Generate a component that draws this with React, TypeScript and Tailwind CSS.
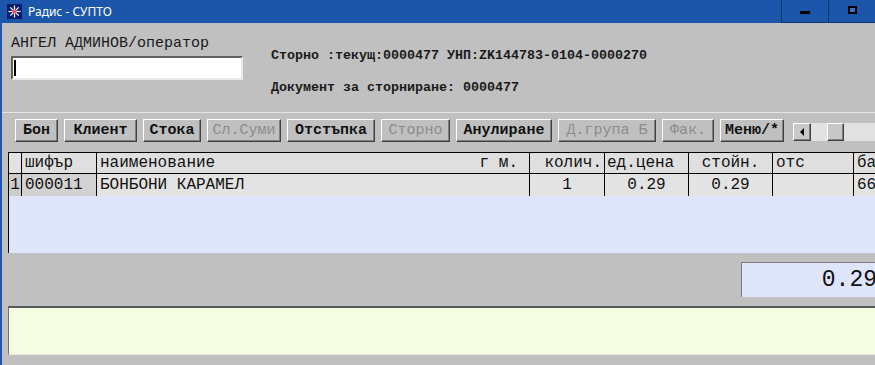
import React from 'react';

const mono = { fontFamily: '"Liberation Mono", "Courier New", monospace' };

interface Btn {
  label: string;
  w: string;
  disabled?: boolean;
}

const buttons: Btn[] = [
  { label: 'Бон', w: 'w-[43px]' },
  { label: 'Клиент', w: 'w-[73px]' },
  { label: 'Стока', w: 'w-[58px]' },
  { label: 'Сл.Суми', w: 'w-[74px]', disabled: true },
  { label: 'Отстъпка', w: 'w-[88px]' },
  { label: 'Сторно', w: 'w-[69px]', disabled: true },
  { label: 'Анулиране', w: 'w-[96px]' },
  { label: 'Д.група Б', w: 'w-[98px]', disabled: true },
  { label: 'Фак.', w: 'w-[52px]', disabled: true },
  { label: 'Меню/*', w: 'w-[64px]' },
];

const AppIcon = () => (
  <svg width="15" height="15" viewBox="0 0 15 15">
    <rect width="15" height="15" fill="#0b1c6e" />
    <g stroke="#ffffff" strokeWidth="1.2">
      <line x1="7.5" y1="1.5" x2="7.5" y2="13.5" />
      <line x1="1.5" y1="7.5" x2="13.5" y2="7.5" />
      <line x1="3.3" y1="3.3" x2="11.7" y2="11.7" />
      <line x1="11.7" y1="3.3" x2="3.3" y2="11.7" />
    </g>
    <circle cx="7.5" cy="7.5" r="2" fill="#ff4d6d" />
  </svg>
);

// raised win32-style button edge
const raised =
  'border border-t-white border-l-white border-r-[#404040] border-b-[#404040] shadow-[inset_-1px_-1px_0_#808080]';

const cell = 'shrink-0 border-r border-black';

export default function App() {
  return (
    <div className="w-[875px] h-[365px] overflow-hidden bg-[#c0c0c0] flex flex-col" style={mono}>
      {/* title bar */}
      <div className="h-[23px] shrink-0 bg-[#1c56aa] flex items-center">
        <div className="ml-[7px]">
          <AppIcon />
        </div>
        <span
          className="ml-[6px] text-white text-[12px] leading-none"
          style={{ fontFamily: '"Noto Sans", "Open Sans", sans-serif' }}
        >
          Радис - СУПТО
        </span>
        <div className="ml-auto flex h-full self-stretch">
          <div className="w-[47px] h-full border-l border-b border-[#0f3672] flex items-center justify-center">
            <div className="w-[10px] h-[3px] bg-black mt-[2px]" />
          </div>
          <div className="w-[47px] h-full border-l border-b border-[#0f3672] flex items-start pl-[19px] pt-[6px]">
            <div className="w-[9px] h-[8px] border-2 border-black bg-[#3c74c4]" />
          </div>
        </div>
      </div>

      <div className="flex flex-1 min-h-0">
        <div className="w-[2px] bg-[#1c56aa] shrink-0" />
        <div className="flex-1 flex flex-col min-w-0">
          {/* header info */}
          <div className="h-[89px] shrink-0 flex">
            <div className="w-[269px] pl-[9px] pt-[12px] shrink-0">
              <div className="text-[15px] leading-[18px] text-[#1a1a1a]">АНГЕЛ АДМИНОВ/оператор</div>
              <div className="mt-[3px] w-[232px] h-[24px] bg-white border-2 border-t-[#606060] border-l-[#606060] border-r-[#e8e8e8] border-b-[#e8e8e8] flex items-center pl-[1px]">
                <div className="w-[2px] h-[16px] bg-black" />
              </div>
            </div>
            <div className="pt-[25px] text-[13.33px] font-bold text-[#1a1a1a]">
              <div className="leading-[16px] whitespace-nowrap">Сторно :текущ:0000477 УНП:ZK144783-0104-0000270</div>
              <div className="leading-[16px] mt-[16px] whitespace-nowrap">Документ за сторниране: 0000477</div>
            </div>
          </div>

          {/* toolbar */}
          <div className="h-[40px] shrink-0 border-t border-[#e4e4e4] pt-[6px] pl-[13px] flex items-start gap-[6px]">
            {buttons.map((b) => (
              <div
                key={b.label}
                className={`${b.w} h-[23px] shrink-0 ${raised} flex items-center justify-center text-[15px] leading-none whitespace-nowrap ${
                  b.disabled ? 'text-[#8c8c8c]' : 'text-[#111] font-bold'
                }`}
              >
                {b.label}
              </div>
            ))}
            <div className="ml-[3px] mt-[4px] h-[18px] w-[120px] shrink-0 bg-[#e2e2e2] flex">
              <div className={`w-[18px] h-[18px] bg-[#c8c8c8] ${raised} flex items-center justify-center`}>
                <div className="w-0 h-0 border-y-[4px] border-y-transparent border-r-[4px] border-r-black" />
              </div>
              <div className={`ml-[16px] w-[17px] h-[18px] bg-[#c8c8c8] ${raised}`} />
            </div>
          </div>

          {/* grid */}
          <div className="ml-[6px] h-[101px] shrink-0 bg-[#dfe6fc] border-t border-l border-black flex flex-col text-[16px] text-[#111]">
            <div className="flex h-[21px] bg-[#dfdfdf] border-b border-black leading-[20px] whitespace-nowrap">
              <div className={`w-[13px] ${cell} bg-[#e2e2e2]`} />
              <div className={`w-[75px] ${cell} pl-[3px]`}>шифър</div>
              <div className={`w-[433px] ${cell} pl-[3px] flex`}>
                <span>наименование</span>
                <span className="ml-auto pr-[11px]">г м.</span>
              </div>
              <div className={`w-[75px] ${cell} text-right pr-[2px]`}>колич.</div>
              <div className={`w-[84px] ${cell} pl-[2px]`}>ед.цена</div>
              <div className={`w-[84px] ${cell} text-center`}>стойн.</div>
              <div className={`w-[81px] ${cell} pl-[3px]`}>отс</div>
              <div className="w-[60px] shrink-0 pl-[3px]">ба</div>
            </div>
            <div className="flex h-[22px] bg-[#e3e3e3] leading-[22px] whitespace-nowrap">
              <div className={`w-[13px] ${cell} bg-[#cdcdcd] text-center`}>1</div>
              <div className={`w-[75px] ${cell} bg-[#d2d2d2] pl-[3px]`}>000011</div>
              <div className={`w-[433px] ${cell} pl-[3px]`}>БОНБОНИ КАРАМЕЛ</div>
              <div className={`w-[75px] ${cell} text-center`}>1</div>
              <div className={`w-[84px] ${cell} text-center`}>0.29</div>
              <div className={`w-[84px] ${cell} text-center`}>0.29</div>
              <div className={`w-[81px] ${cell}`} />
              <div className="w-[60px] shrink-0 pl-[3px]">66</div>
            </div>
          </div>

          {/* total */}
          <div className="h-[53px] shrink-0 flex items-start pt-[9px]">
            <div className="ml-[739px] w-[150px] h-[35px] shrink-0 bg-[#dfe6fc] border-t border-l border-[#7c7c7c] flex items-center justify-end pr-[14px] text-[23px] text-[#111] leading-none">
              0.29
            </div>
          </div>

          {/* message line */}
          <div className="ml-[6px] h-[49px] shrink-0 bg-[#f5fde2] border-t-2 border-l border-b border-t-[#5a5a5a] border-l-[#707070] border-b-[#e6e6e6]" />
        </div>
      </div>
    </div>
  );
}
